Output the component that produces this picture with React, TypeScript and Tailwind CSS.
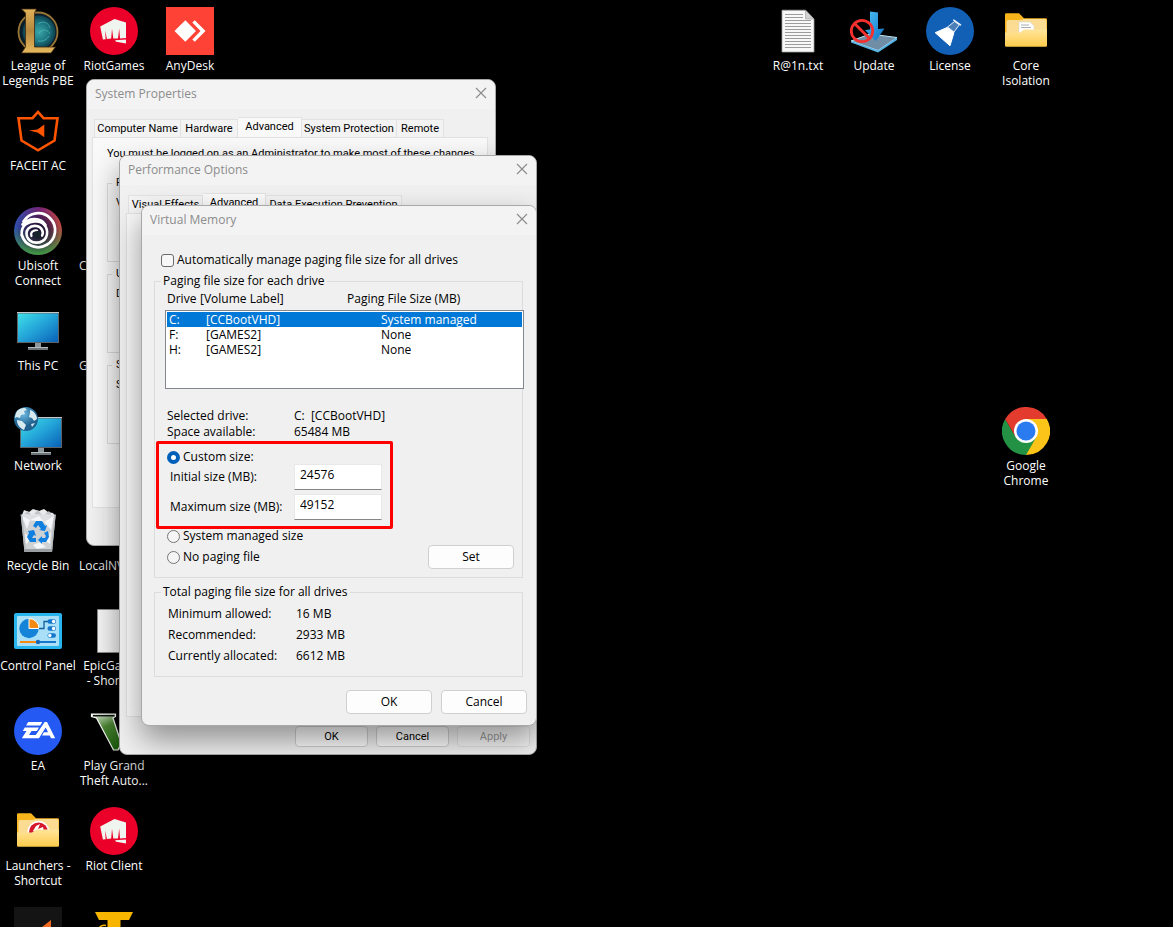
import React, { useState } from 'react';
import clsx from 'clsx';

const Svg: React.FC<{ children: React.ReactNode }> = ({ children }) => (
  <svg viewBox="0 0 48 48" className="w-12 h-12 shrink-0" aria-hidden="true">
    {children}
  </svg>
);

const LeagueIcon = () => (
  <Svg>
    <defs>
      <linearGradient id="lolGold" x1="0" y1="0" x2="0" y2="1">
        <stop offset="0" stopColor="#e0b25a" />
        <stop offset="0.5" stopColor="#b5873e" />
        <stop offset="1" stopColor="#e6b95e" />
      </linearGradient>
      <radialGradient id="lolTeal">
        <stop offset="0" stopColor="#3aa6a8" />
        <stop offset="0.6" stopColor="#1c7580" />
        <stop offset="1" stopColor="#0e3f4e" />
      </radialGradient>
    </defs>
    <circle cx="24" cy="25" r="19.5" fill="#0b1d28" stroke="#9a7636" strokeWidth="1.8" />
    <circle cx="25" cy="25" r="16.5" fill="url(#lolTeal)" />
    <path d="M24 17c5-4 11-1 12 4M25 26c4-5 9-3 11 1M24 34c6 1 9-2 11-5" fill="none" stroke="#5cc4c2" strokeWidth="1" opacity=".6" />
    <path d="M7.500 2h15l-2 4v34h21l-4.500 6H7.500l4-6V6z" fill="url(#lolGold)" stroke="#3c2a10" strokeWidth=".8" />
  </Svg>
);

const RiotIcon = () => (
  <Svg>
    <circle cx="24" cy="24" r="24" fill="#eb0029" />
    <path d="M10.200 19.500 24.500 12 36 15.500v15.500l-6 .4-.8-9.800-1.200 9.800-4.700.2-1.300-9.800-.8 9.800-4.300.4-1.700-8.800.4 9-2.700.4z" fill="#f1f5ef" />
    <path d="M25 33.200 36 32.500v4L26 34.800z" fill="#f1f5ef" />
  </Svg>
);

const AnyDeskIcon = () => (
  <Svg>
    <rect width="48" height="48" fill="#ff4236" />
    <path d="M8.500 24 19.300 13.200 30 24 19.300 34.800z" fill="#fff" />
    <path d="M26.300 15.600 28.800 13.200 39.500 24 28.800 34.800 26.300 32.400 34.500 24z" fill="#fff" />
  </Svg>
);

const FaceitIcon = () => (
  <Svg>
    <path d="M4.500 11.200H18.500L24 5 29.500 11.200H43.500L40.500 33.500 24 43.300 7.500 33.500z" fill="none" stroke="#ff5500" strokeWidth="2.600" />
    <path d="M15 23.500 23.500 22.500 30.300 17.500V30.300L23.500 25.500z" fill="#ff5500" />
  </Svg>
);

const UbisoftIcon = () => (
  <Svg>
    <defs>
      <linearGradient id="ubiA" x1="0" y1="0" x2="1" y2="0">
        <stop offset="0" stopColor="#2a4fb0" />
        <stop offset="0.55" stopColor="#7a2475" />
        <stop offset="1" stopColor="#c04a3c" />
      </linearGradient>
      <linearGradient id="ubiB" x1="0" y1="0" x2="0" y2="1">
        <stop offset="0.4" stopColor="#3b9a3f" stopOpacity="0" />
        <stop offset="1" stopColor="#3b9a3f" />
      </linearGradient>
      <radialGradient id="ubiC">
        <stop offset="0.3" stopColor="#14122e" stopOpacity=".85" />
        <stop offset="1" stopColor="#14122e" stopOpacity="0" />
      </radialGradient>
    </defs>
    <circle cx="24" cy="24" r="24" fill="url(#ubiA)" />
    <circle cx="24" cy="24" r="24" fill="url(#ubiB)" />
    <circle cx="24" cy="24" r="22" fill="url(#ubiC)" />
    <g fill="none" stroke="#fff" strokeLinecap="round">
      <path d="M9.500 14.500A17 17 0 1 1 7.800 28" strokeWidth="2.800" />
      <path d="M8.500 17.500C15 10.500 27 10 31.500 18" strokeWidth="2.600" />
      <path d="M7.800 28C6.500 18 15 13.500 23 14.500 32 15.500 35 24 32 30.500 28 37.500 16 37.500 13 29.500 11 23 16 18 22.500 19 28 20 30 25 28 28.500" strokeWidth="2.600" />
      <path d="M17.500 29C16 25.500 19.500 22.500 23 23.500" strokeWidth="2.200" />
    </g>
    <circle cx="23.500" cy="27.500" r="3.600" fill="#17242c" />
  </Svg>
);

const ScreenGradient: React.FC<{ id: string }> = ({ id }) => (
  <linearGradient id={id} x1="0" y1="0" x2="1" y2="1">
    <stop offset="0" stopColor="#3fe0e8" />
    <stop offset="0.5" stopColor="#23a3d8" />
    <stop offset="1" stopColor="#0a62b8" />
  </linearGradient>
);

const ThisPcIcon = () => (
  <Svg>
    <defs><ScreenGradient id="pcScreen" /></defs>
    <rect x="3" y="5" width="42" height="31" fill="#5e6468" />
    <rect x="3" y="5" width="42" height="1" fill="#c4c8ca" />
    <rect x="4" y="6.500" width="40" height="28.500" fill="url(#pcScreen)" />
    <rect x="21" y="36" width="6" height="4" fill="#8e979c" />
    <rect x="14" y="40" width="20" height="3" fill="#6d757a" />
    <rect x="14" y="40" width="20" height="1" fill="#b5bcc0" />
  </Svg>
);

const NetworkIcon = () => (
  <Svg>
    <defs>
      <ScreenGradient id="netScreen" />
      <radialGradient id="netGlobe" cx=".4" cy=".3">
        <stop offset="0" stopColor="#6cb9e2" />
        <stop offset="1" stopColor="#20618f" />
      </radialGradient>
    </defs>
    <rect x="6" y="10" width="42" height="31" fill="#5e6468" />
    <rect x="6" y="10" width="42" height="1" fill="#c4c8ca" />
    <rect x="7" y="11.500" width="40" height="28.500" fill="url(#netScreen)" />
    <rect x="24" y="41" width="6" height="4" fill="#8e979c" />
    <rect x="17" y="45" width="20" height="3" fill="#6d757a" />
    <rect x="17" y="45" width="20" height="1" fill="#b5bcc0" />
    <circle cx="12" cy="12" r="12" fill="url(#netGlobe)" />
    <path d="M3 4c3-3 6-3 8-3l2 2-3 1 1 3-4 1-1 3-3-1-2 1c0-3 1-5 2-7zM3 13l5 1 4 4-2 5c-4-2-7-5-7-10zM16 3c4 1 7 5 7 9l-3 2-2-3-3-1 1-4zM17 17l4-1-3 4z" fill="#d7eaf0" />
  </Svg>
);

const RecycleBinIcon = () => (
  <Svg>
    <path d="M8 8l2-5 5 2 4-3 6 2 5-2 4 3 5 1 2 3-2 5H9z" fill="#e8eaeb" />
    <path d="M10 7l4-3 3 4zM20 7l4-4 4 5zM31 7l4-3 3 5z" fill="#bfc3c6" />
    <path d="M6.700 7.500h35L38 45H10.500z" fill="#dcdfe1" opacity=".94" />
    <path d="M8 9l8 4-3 9zM16 13l9-4 5 6zM30 15l10-6-3 14zM11 26l6 6-5 5zM37 24l-5 10 4 3zM19 38l7-3 6 5-9 2z" fill="#f4f5f6" />
    <path d="M6.700 7.500 10.500 45H12L8.500 9zM41.700 7.500 38 45H36.500L40 9z" fill="#b4b8bb" />
    <path d="M10.200 42h28l-.3 3H10.500z" fill="#9a9fa3" />
    <g fill="#0f7fe0">
      <path d="M19 19l3-5h6l3 5 2-1-2 6-6-1 2-1-3-4-2 3z" />
      <path d="M14 24l6-1 2 6-2-1-2 3h4v4h-6l-3-5 2-4z" />
      <path d="M34 24l1 6-3 5h-4v2l-4-4 4-4v2h3l1-2-2-3z" />
    </g>
  </Svg>
);

const ControlPanelIcon = () => (
  <Svg>
    <rect y="6" width="48" height="36" rx="2" fill="#28b4ec" />
    <rect x="3" y="9" width="42" height="30" rx="1" fill="#a9e0f8" />
    <circle cx="15" cy="21.500" r="9.700" fill="#1583d8" />
    <path d="M15 21.500V11.500A10 10 0 0 1 25 21.500z" fill="#f58a12" stroke="#fff" strokeWidth="1" />
    <path d="M25 21.500h5v-7h5" fill="none" stroke="#155d9c" strokeWidth="1.300" />
    {[14.500, 21.500, 28.500].map((y, i) => (
      <g key={y}>
        <rect x="33.500" y={y - 2.200} width="8.500" height="4.400" rx="2.200" fill="#1577cc" />
        <circle cx={i === 2 ? 35.8 : 39.6} cy={y} r="1.700" fill="#fff" />
      </g>
    ))}
    <path d="M6 35h17" stroke="#f58a12" strokeWidth="2" />
    <path d="M25 35h17" stroke="#1577cc" strokeWidth="2" />
    <circle cx="24" cy="35" r="2.200" fill="#1567b4" />
  </Svg>
);

const EaIcon = () => (
  <Svg>
    <circle cx="24" cy="24" r="24" fill="#2459f4" />
    <path d="M14.200 15H28.300L26.200 18.500H12.100zM10.800 20.600H25L22.900 24H17.500L15 28H21.800L30.700 15H33L41.200 31.300H37L35.700 28.500H28L29.900 25.200H34L31.700 20.500 25 31.300H7.800L12.500 24H8.800z" fill="#fff" />
  </Svg>
);

const FolderIcon: React.FC<{ id: string; children?: React.ReactNode }> = ({ id, children }) => (
  <Svg>
    <defs>
      <linearGradient id={id} x1="0" y1="0" x2="0" y2="1">
        <stop offset="0" stopColor="#ffe59b" />
        <stop offset="1" stopColor="#fdcb4b" />
      </linearGradient>
    </defs>
    <path d="M3 7.500a1.300 1.300 0 0 1 1.300-1.300H17l5 5H43.700A1.300 1.300 0 0 1 45 12.500V30H3z" fill="#f8b41b" />
    <path d="M4.500 14.500A1.500 1.500 0 0 1 6 13H18l4-1H43a1.500 1.500 0 0 1 1.500 1.500V30h-40z" fill="#fbdc92" />
    {children}
    <path d="M3 25.500H18l4-3H45V38.500A1.300 1.300 0 0 1 43.700 39.800H4.300A1.300 1.300 0 0 1 3 38.500z" fill={`url(#${id})`} />
  </Svg>
);

const LaunchersIcon = () => (
  <FolderIcon id="folderLaunchers">
    <circle cx="24.500" cy="25" r="11" fill="#fff" />
    <circle cx="24.500" cy="25" r="9.500" fill="#d5182d" />
    <path d="M19 24l3-5 4-2-2 5 5-2 1 5z" fill="#fff" />
  </FolderIcon>
);

const CoreIsolationIcon = () => (
  <FolderIcon id="folderCore">
    <path d="M17 15H28l4 4v8H17z" fill="#fff" stroke="#d5d8da" strokeWidth=".6" />
    <path d="M19 18h8M19 20.500h10" stroke="#a8b0b6" strokeWidth="1" />
  </FolderIcon>
);

const TxtIcon = () => (
  <Svg>
    <path d="M8 3.200H31.500L40 12V45H8z" fill="#f8f8f8" stroke="#a0a0a0" strokeWidth=".8" />
    <path d="M31.500 3.200V12H40z" fill="#cfd1d3" stroke="#9a9a9a" strokeWidth=".6" />
    <path d="M11 7.500h18M11 10.500h18M11 13.500h26M11 16.500h26M11 19.500h26M11 22.500h26M11 25.500h26M11 28.500h26M11 31.500h26M11 34.500h26M11 37.500h26M11 40.500h26" stroke="#9c9c9c" strokeWidth="1" />
  </Svg>
);

const UpdateIcon = () => (
  <Svg>
    <defs>
      <linearGradient id="updArrow" x1="0" y1="0" x2="1" y2="1">
        <stop offset="0" stopColor="#4fc2f7" />
        <stop offset="1" stopColor="#0c6fc4" />
      </linearGradient>
    </defs>
    <path d="M1 34 20 27 47 30.500 28 43.500z" fill="#6f8ea6" stroke="#bfe4f7" strokeWidth="1" />
    <path d="M1 34 28 43.500 47 30.500V33L28 45.500 1 35.500z" fill="#55b4e6" />
    <path d="M20 4.500 28 5.500V22l6.500-.5L25.700 34 15 23l5-.5z" fill="url(#updArrow)" />
    <circle cx="12" cy="24" r="10.700" fill="none" stroke="#f5302f" strokeWidth="2.800" />
    <path d="M4.500 16.500 19.500 31.500" stroke="#f5302f" strokeWidth="2.800" />
  </Svg>
);

const LicenseIcon = () => (
  <Svg>
    <circle cx="24" cy="24" r="24" fill="#125fb6" />
    <path d="M21.500 20 28.500 14.500 33.300 17.800 28 25z" fill="#4d7fb8" stroke="#e8f0f8" strokeWidth="1" />
    <path d="M27.800 13.200l6.700 4.600" stroke="#e8f0f8" strokeWidth="1.600" strokeLinecap="round" />
    <path d="M9.200 25.700 21 20.500 28 25.500 24 38.800z" fill="#fff" stroke="#fff" strokeWidth="1" strokeLinejoin="round" />
  </Svg>
);

const ChromeIcon = () => (
  <Svg>
    <path d="M24 24 3.200 12A24 24 0 0 1 44.800 12z" fill="#e33b2e" />
    <path d="M24 24V12H44.800A24 24 0 0 1 24 48z" fill="#fcc419" />
    <path d="M3.200 12 13.600 30 24 24 34.400 30 24 48A24 24 0 0 1 3.200 12z" fill="#249245" />
    <path d="M3.200 12 13.600 30 24 12z" fill="#e33b2e" />
    <circle cx="24" cy="24" r="12" fill="#fff" />
    <circle cx="24" cy="24" r="9.500" fill="#2b7bf0" />
  </Svg>
);

const EpicIcon = () => (
  <Svg>
    <path d="M7.500 2.500H41V45.500H7.500z" fill="#f4f4f4" stroke="#8d8d8d" strokeWidth=".8" />
  </Svg>
);

const GtaIcon = () => (
  <Svg>
    <defs>
      <linearGradient id="gtaGreen" x1="0" y1="0" x2="0.500" y2="1">
        <stop offset="0" stopColor="#e6efe2" />
        <stop offset="0.4" stopColor="#4c8634" />
        <stop offset="1" stopColor="#1f660e" />
      </linearGradient>
    </defs>
    <path d="M1.500 7H25.500V9.500L23 11 29.500 31 36 11 33 10V7H47V10L43.500 11 28 43H23.500L6.500 11 1.500 9.500z" fill="url(#gtaGreen)" stroke="#fff" strokeWidth="1.200" />
    <path d="M3 8.700H24.500" stroke="#111" strokeWidth="1.500" />
  </Svg>
);

const DarkTileIcon = () => (
  <Svg>
    <rect width="48" height="48" fill="#141414" />
    <path d="M37 13v17l-9-10z" fill="#f26a22" />
  </Svg>
);

const YellowTIcon = () => (
  <Svg>
    <path d="M5 5H43L39 13H30.500V48H17.500V13H9z" fill="#f7b500" />
    <path d="M16 18.500c-4-.6-7 1-7 4" fill="none" stroke="#f7b500" strokeWidth="1.500" />
  </Svg>
);

// cells of the desktop grid, 76x100 each
const shortcuts: { label: string; icon?: React.ElementType; cell: string; left?: boolean }[] = [
  { label: 'League of Legends PBE', icon: LeagueIcon, cell: 'col-start-1 row-start-1' },
  { label: 'FACEIT AC', icon: FaceitIcon, cell: 'col-start-1 row-start-2' },
  { label: 'Ubisoft Connect', icon: UbisoftIcon, cell: 'col-start-1 row-start-3' },
  { label: 'This PC', icon: ThisPcIcon, cell: 'col-start-1 row-start-4' },
  { label: 'Network', icon: NetworkIcon, cell: 'col-start-1 row-start-5' },
  { label: 'Recycle Bin', icon: RecycleBinIcon, cell: 'col-start-1 row-start-6' },
  { label: 'Control Panel', icon: ControlPanelIcon, cell: 'col-start-1 row-start-7' },
  { label: 'EA', icon: EaIcon, cell: 'col-start-1 row-start-8' },
  { label: 'Launchers - Shortcut', icon: LaunchersIcon, cell: 'col-start-1 row-start-9' },
  { label: '', icon: DarkTileIcon, cell: 'col-start-1 row-start-10' },
  { label: 'RiotGames', icon: RiotIcon, cell: 'col-start-2 row-start-1' },
  { label: 'C', cell: 'col-start-2 row-start-3', left: true },
  { label: 'G', cell: 'col-start-2 row-start-4', left: true },
  { label: 'LocalNV', cell: 'col-start-2 row-start-6', left: true },
  { label: 'EpicGames\n- Shortcut', icon: EpicIcon, cell: 'col-start-2 row-start-7' },
  { label: 'Play Grand Theft Auto...', icon: GtaIcon, cell: 'col-start-2 row-start-8' },
  { label: 'Riot Client', icon: RiotIcon, cell: 'col-start-2 row-start-9' },
  { label: '', icon: YellowTIcon, cell: 'col-start-2 row-start-10' },
  { label: 'AnyDesk', icon: AnyDeskIcon, cell: 'col-start-3 row-start-1' },
  { label: 'R@1n.txt', icon: TxtIcon, cell: 'col-start-11 row-start-1' },
  { label: 'Update', icon: UpdateIcon, cell: 'col-start-12 row-start-1' },
  { label: 'License', icon: LicenseIcon, cell: 'col-start-13 row-start-1' },
  { label: 'Core Isolation', icon: CoreIsolationIcon, cell: 'col-start-14 row-start-1' },
  { label: 'Google Chrome', icon: ChromeIcon, cell: 'col-start-14 row-start-5' },
];

const Window: React.FC<{ title: string; className: string; children: React.ReactNode }> = ({ title, className, children }) => (
  <section
    aria-label={title}
    className={clsx('absolute flex flex-col rounded-lg border border-[#a8a8a8] bg-[#f0f0f0] overflow-hidden shadow-[0_14px_30px_rgba(0,0,0,0.4)]', className)}
  >
    <header className="flex h-[29px] shrink-0 items-center justify-between bg-[#f3f3f3] pl-2 pr-2 text-[#8c8c8c]">
      <h2 className="pb-px">{title}</h2>
      <button type="button" aria-label={`Close ${title}`} className="pb-1">
        <svg viewBox="0 0 12 12" className="w-3 h-3">
          <path d="M1 1l10 10M11 1L1 11" stroke="#8a8a8a" strokeWidth="1.100" />
        </svg>
      </button>
    </header>
    {children}
  </section>
);

const Tabs: React.FC<{ tabs: { name: string; width: string }[]; active: string }> = ({ tabs, active }) => (
  <div role="tablist" className="flex h-5 shrink-0 items-end">
    {tabs.map(({ name, width }) => (
      <button
        key={name}
        type="button"
        role="tab"
        aria-selected={name === active}
        className={clsx(
          'border-t border-r border-[#e2e2e2] whitespace-nowrap first:border-l',
          width,
          name === active ? 'h-5 bg-[#f9f9f9] pb-[2px]' : 'h-[18px] bg-[#f3f3f3]'
        )}
      >
        {name}
      </button>
    ))}
  </div>
);

const PushButton: React.FC<{ label: string; className: string; disabled?: boolean }> = ({ label, className, disabled }) => (
  <button
    type="button"
    disabled={disabled}
    className={clsx('rounded border border-[#d0d0d0] bg-[#fdfdfd] disabled:border-[#e0e0e0] disabled:bg-[#f5f5f5] disabled:text-[#9a9a9a]', className)}
  >
    {label}
  </button>
);

const Radio: React.FC<{ label: string; checked: boolean; onChange: () => void }> = ({ label, checked, onChange }) => (
  <label className="flex h-[14px] items-center gap-[3px]">
    <input
      type="radio"
      name="paging"
      checked={checked}
      onChange={onChange}
      className="w-[13px] h-[13px] appearance-none rounded-full border border-[#757575] bg-[#f5f5f5] checked:border-4 checked:border-[#005fb8] checked:bg-white"
    />
    {label}
  </label>
);

const systemGroups = [
  { legend: 'Performance', text: 'Visual effects, processor scheduling, memory usage', className: 'h-[87px]' },
  { legend: 'User Profiles', text: 'Desktop settings related to your sign-in', className: 'mt-1 h-[87px]' },
  { legend: 'Startup and Recovery', text: 'System startup, system failure, and debugging', className: 'mt-1 h-[87px]' },
];

const SystemProperties = () => (
  <Window title="System Properties" className="left-[86px] top-[79px] w-[410px]">
    <div className="pl-[5px] pr-[7px] pt-2 pb-[37px] font-['Roboto',sans-serif] text-[11px]">
      <div className="pl-[2px]">
        <Tabs
          active="Advanced"
          tabs={[
            { name: 'Computer Name', width: 'w-[87px]' },
            { name: 'Hardware', width: 'w-[57px]' },
            { name: 'Advanced', width: 'w-16' },
            { name: 'System Protection', width: 'w-[95px]' },
            { name: 'Remote', width: 'w-[47px]' },
          ]}
        />
      </div>
      <div className="h-[371px] border border-[#e2e2e2] bg-[#f9f9f9] px-[14px] pt-2">
        <p className="whitespace-nowrap">You must be logged on as an Administrator to make most of these changes.</p>
        <div className="pt-[13px]">
          {systemGroups.map(group => (
            <fieldset key={group.legend} className={clsx('border border-[#dcdcdc] px-1', group.className)}>
              <legend className="px-1">{group.legend}</legend>
              <p className="truncate px-1 pt-1">{group.text}</p>
            </fieldset>
          ))}
        </div>
      </div>
    </div>
  </Window>
);

const PerformanceOptions = () => (
  <Window title="Performance Options" className="left-[119px] top-[155px] w-[418px]">
    <div className="pl-[6px] pr-[5px] pt-2 font-['Roboto',sans-serif] text-[11px]">
      <div className="pl-[2px]">
        <Tabs
          active="Advanced"
          tabs={[
            { name: 'Visual Effects', width: 'w-[75px]' },
            { name: 'Advanced', width: 'w-[63px]' },
            { name: 'Data Execution Prevention', width: 'w-[136px]' },
          ]}
        />
      </div>
      <div className="h-[504px] border border-[#e2e2e2] bg-[#f9f9f9]" />
      <div className="flex justify-end gap-2 pt-[9px] pb-[7px] pr-[1px]">
        <PushButton label="OK" className="w-[73px] h-[21px]" />
        <PushButton label="Cancel" className="w-[73px] h-[21px]" />
        <PushButton label="Apply" className="w-[73px] h-[21px]" disabled />
      </div>
    </div>
  </Window>
);

const drives = [
  { drive: 'C:', volume: '[CCBootVHD]', size: 'System managed' },
  { drive: 'F:', volume: '[GAMES2]', size: 'None' },
  { drive: 'H:', volume: '[GAMES2]', size: 'None' },
];

const totals = [
  { label: 'Minimum allowed:', value: '16 MB' },
  { label: 'Recommended:', value: '2933 MB' },
  { label: 'Currently allocated:', value: '6612 MB' },
];

const VirtualMemory = () => {
  const [auto, setAuto] = useState(false);
  const [mode, setMode] = useState<'custom' | 'system' | 'none'>('custom');
  const [selected, setSelected] = useState('C:');
  const [initial, setInitial] = useState('24576');
  const [maximum, setMaximum] = useState('49152');

  const inputClass = 'w-[88px] h-[26px] border border-[#e8e8e8] border-b-[#868686] bg-white pl-[5px] pb-[5px]';

  return (
    <Window title="Virtual Memory" className="left-[141px] top-[205px] w-[396px]">
      <div className="pl-3 pr-[13px] pt-[17px]">
        <label className="ml-[7px] flex h-4 items-center gap-[3px]">
          <input
            type="checkbox"
            checked={auto}
            onChange={() => setAuto(!auto)}
            className="w-[13px] h-[13px] appearance-none rounded-[3px] border border-[#6b6b6b] bg-[#f7f7f7] checked:bg-[#005fb8]"
          />
          Automatically manage paging file size for all drives
        </label>

        <fieldset className="mt-[5px] border border-[#dcdcdc] pb-2">
          <legend className="ml-[6px] px-[2px]">Paging file size for each drive</legend>
          <div className="flex pl-3 pt-[2px]">
            <span className="w-[33px]">Drive</span>
            <span className="w-[147px]">[Volume Label]</span>
            <span>Paging File Size (MB)</span>
          </div>
          <div className="ml-[10px] -mr-[2px] mt-[3px] h-[79px] border border-[#828790] bg-white p-px">
            <table className="w-full table-fixed border-collapse text-left leading-[15px]">
              <colgroup>
                <col className="w-[39px]" />
                <col className="w-[175px]" />
                <col />
              </colgroup>
              <tbody>
                {drives.map(row => (
                  <tr
                    key={row.drive}
                    onClick={() => setSelected(row.drive)}
                    className={row.drive === selected ? 'bg-[#0078d7] text-white' : ''}
                  >
                    <td className="p-0 pl-[2px]">{row.drive}</td>
                    <td className="p-0">{row.volume}</td>
                    <td className="p-0">{row.size}</td>
                  </tr>
                ))}
              </tbody>
            </table>
          </div>

          <dl className="grid grid-cols-[127px_1fr] pl-3 pt-[19px]">
            <dt>Selected drive:</dt>
            <dd className="whitespace-pre">{'C:  [CCBootVHD]'}</dd>
            <dt>Space available:</dt>
            <dd>65484 MB</dd>
          </dl>

          <div className="ml-px mt-px w-[237px] rounded-[2px] border-[3px] border-[#ff0000] pb-[6px] pl-2">
            <div className="h-5 pt-[6px]">
              <Radio label="Custom size:" checked={mode === 'custom'} onChange={() => setMode('custom')} />
            </div>
            <div className="flex items-center pl-[3px]">
              <label htmlFor="initial-size" className="w-[124px]">Initial size (MB):</label>
              <input id="initial-size" className={inputClass} value={initial} onChange={e => setInitial(e.target.value)} />
            </div>
            <div className="mt-1 flex items-center pl-[3px]">
              <label htmlFor="maximum-size" className="w-[124px]">Maximum size (MB):</label>
              <input id="maximum-size" className={inputClass} value={maximum} onChange={e => setMaximum(e.target.value)} />
            </div>
          </div>

          <div className="pl-3 pb-[2px]">
            <Radio label="System managed size" checked={mode === 'system'} onChange={() => setMode('system')} />
          </div>
          <div className="flex items-center justify-between pl-3 pr-2">
            <Radio label="No paging file" checked={mode === 'none'} onChange={() => setMode('none')} />
            <PushButton label="Set" className="w-[86px] h-6" />
          </div>
        </fieldset>

        <fieldset className="mt-[6px] border border-[#dcdcdc] pb-[10px]">
          <legend className="ml-[6px] px-[2px]">Total paging file size for all drives</legend>
          <dl className="grid grid-cols-[128px_1fr] pl-[13px] pt-[3px] leading-[21px]">
            {totals.map(row => (
              <React.Fragment key={row.label}>
                <dt>{row.label}</dt>
                <dd>{row.value}</dd>
              </React.Fragment>
            ))}
          </dl>
        </fieldset>
      </div>

      <div className="flex justify-end gap-[9px] pt-[13px] pb-[11px] pr-[9px]">
        <PushButton label="OK" className="w-[86px] h-6" />
        <PushButton label="Cancel" className="w-[86px] h-6" />
      </div>
    </Window>
  );
};

const App = () => (
  <main className="relative h-screen overflow-hidden bg-black font-['Open_Sans','Noto_Sans',sans-serif] text-[12px] leading-4 text-black">
    <div className="grid auto-rows-[100px] grid-cols-[repeat(auto-fill,76px)]">
      {shortcuts.map(({ label, icon: Icon, cell, left }) => (
        <button
          key={cell}
          type="button"
          className={clsx('flex flex-col items-center pt-[7px] leading-[15px] text-white', cell)}
        >
          {Icon ? <Icon /> : <span className="h-12 shrink-0" />}
          <span className={clsx('mt-[3px] whitespace-pre-line', left && 'w-full pl-[3px] text-left')}>{label}</span>
        </button>
      ))}
    </div>

    <SystemProperties />
    <PerformanceOptions />
    <VirtualMemory />
  </main>
);

export default App;
